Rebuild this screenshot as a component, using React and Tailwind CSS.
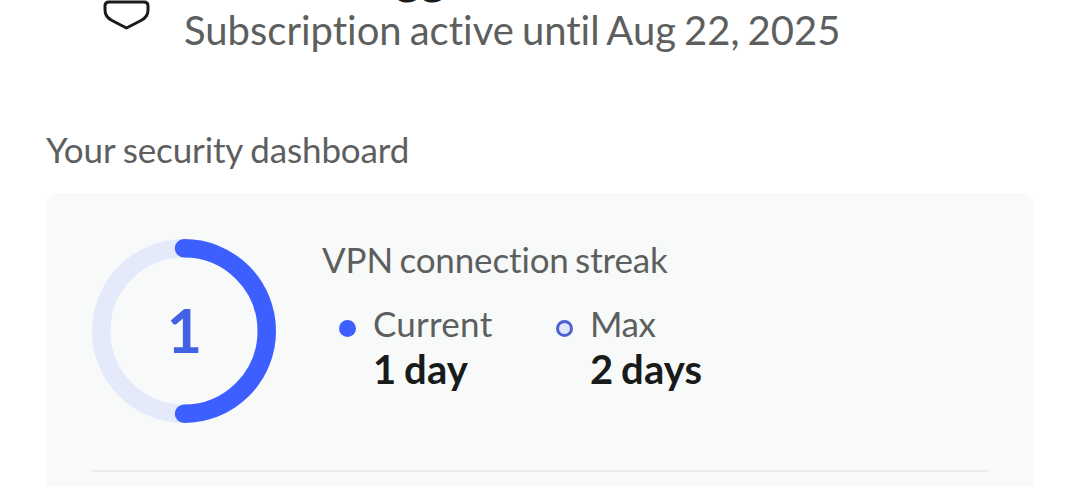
function StreakRing({ value }) {
  return (
    <div className="relative flex h-[184px] w-[184px] items-center justify-center">
      <svg viewBox="0 0 184 184" className="absolute inset-0" fill="none" strokeWidth="18.5">
        <circle cx="92" cy="92" r="82.750" stroke="#e5eafb" />
        <path d="M92 9.250a82.750 82.750 0 0 1 0 165.500" stroke="#3e5fff" strokeLinecap="round" />
      </svg>
      <span className="relative mb-[2px] ml-px text-[61px] leading-[72px] font-bold text-[#4262e6]">{value}</span>
    </div>
  );
}

function Stat({ label, value, dotClass, labelClass }) {
  return (
    <div className="flex">
      <span className={`mt-[19px] mr-[17px] h-[17px] w-[17px] rounded-full ${dotClass}`} />
      <div>
        <div className={`text-[35px] leading-[44px] text-[#5d5f5f] ${labelClass}`}>{label}</div>
        <div className="mt-px text-[40px] leading-[46px] font-bold tracking-[0.1px] [word-spacing:-2px] text-[#191b1b]">{value}</div>
      </div>
    </div>
  );
}

function App() {
  return (
    <div className="h-[486px] w-[1080px] overflow-hidden bg-white font-['Lato',sans-serif] whitespace-nowrap [font-variant-ligatures:none]">
      <div className="flex h-[54px] pl-[103px]">
        <svg width="47" height="30" viewBox="0 0 47 30" fill="none" className="mr-[34px]">
          <path d="M6 2h35q4 0 4 4v4q0 7-7 10.500L23.500 28 9 20.500Q2 17 2 10V6q0-4 4-4Z" stroke="#191b1b" strokeWidth="3" strokeLinejoin="round" />
        </svg>
        <div className="-mt-[51px]">
          <div className="-mt-[2px] mb-[2px] pl-[160px] text-[48px] leading-[57px] font-bold text-[#191b1b]">Logged in</div>
          <div className="text-[40px] leading-[48px] [word-spacing:-2.2px] text-[#5d5f5f]">Subscription active until Aug 22, 2025</div>
        </div>
      </div>

      <h2 className="mt-[73px] ml-[46px] text-[35px] leading-[44px] tracking-[-0.15px] [word-spacing:-0.8px] text-[#5d5f5f]">Your security dashboard</h2>

      <div className="mt-[22px] ml-[46px] h-[320px] w-[988px] rounded-xl bg-[#f7faf9] px-[46px] pt-[46px]">
        <div className="flex h-[233px] border-b-2 border-[#e9ebea]">
          <StreakRing value={1} />
          <div className="-mt-[2px] ml-[46px]">
            <div className="text-[35px] leading-[44px] tracking-[-0.15px] [word-spacing:-2.4px] text-[#5d5f5f]">VPN connection streak</div>
            <div className="mt-[20px] ml-[17px] flex">
              <div className="w-[217px]">
                <Stat label="Current" value="1 day" dotClass="bg-[#3e5fff]" labelClass="tracking-[0.25px]" />
              </div>
              <Stat label="Max" value="2 days" dotClass="border-[3px] border-[#4a61cf] bg-[#e0e6ff]" labelClass="tracking-[-0.4px]" />
            </div>
          </div>
        </div>
      </div>
    </div>
  );
}

export default App;
